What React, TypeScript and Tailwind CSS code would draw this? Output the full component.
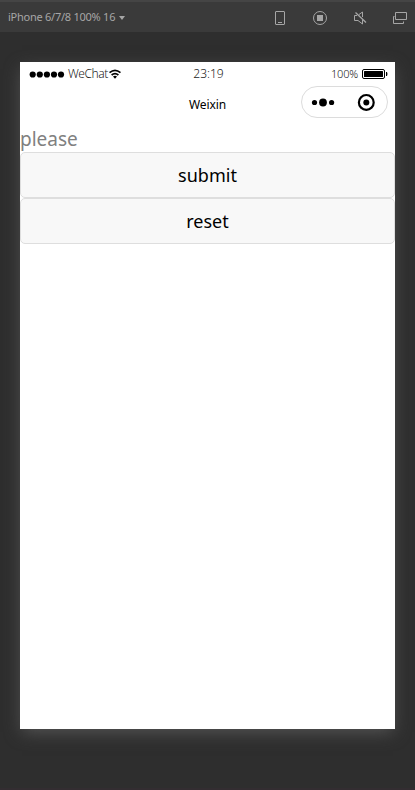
function Toolbar() {
  return (
    <header className="flex h-8 shrink-0 items-center justify-between border-t-2 border-[#454545] bg-[#3a3a3a] pt-0.5 pl-2 pr-[7px] text-[#a6a6a6]">
      <div className="mb-0.5 flex items-center gap-[3px]">
        <span className="w-[108px] whitespace-nowrap text-[11px] leading-4 tracking-[-0.25px]">iPhone 6/7/8 100% 16</span>
        <svg className="mt-0.5" width="6" height="4" viewBox="0 0 6 4" fill="currentColor"><path d="M0 0h6L3 4z" /></svg>
      </div>
      <div className="flex items-center gap-6">
        <svg width="16" height="16" viewBox="0 0 16 16" fill="none" stroke="currentColor">
          <rect x="3.500" y="1.500" width="9" height="13" rx=".5" /><path d="M6 12.500h4" />
        </svg>
        <svg width="16" height="16" viewBox="0 0 16 16" fill="none" stroke="currentColor">
          <circle cx="8" cy="8" r="6.500" /><rect x="5" y="5" width="6" height="6" fill="currentColor" stroke="none" />
        </svg>
        <svg width="16" height="16" viewBox="0 0 16 16" fill="none" stroke="currentColor">
          <path d="M5 5.500H2.500v5h3.500l4.500 3.500V9.500M7 4.500l3.500-2.500v5" /><path d="M3.500 2.500l10.500 10" strokeWidth="1.300" />
        </svg>
        <svg width="16" height="16" viewBox="0 0 16 16" fill="none" stroke="currentColor">
          <path d="M3.500 2.500h11v7h-11zM2.500 6.500h-1v7h10v-2" />
        </svg>
      </div>
    </header>
  );
}

function StatusBar() {
  return (
    <div className="grid h-[22px] grid-cols-3 items-center pl-[9px] pr-[7px] text-[12px] leading-[22px] text-[#222]">
      <div className="flex items-center">
        <svg width="36" height="8" viewBox="0 0 36 8">
          <circle cx="3.700" cy="4.500" r="3.100" /><circle cx="10.800" cy="4.500" r="3.100" /><circle cx="17.900" cy="4.500" r="3.100" /><circle cx="25" cy="4.500" r="3.100" /><circle cx="32" cy="4.500" r="3.100" />
        </svg>
        <span className="ml-[3px] w-[41px] whitespace-nowrap font-light tracking-[-0.4px]">WeChat</span>
        <svg width="12" height="10" viewBox="0 0 12 10" fill="none" stroke="#000" strokeWidth="1.700">
          <path d="M.5 3.700Q6-1 11.500 3.700M2.600 6Q6 3.200 9.400 6" /><path d="M4 7.500Q6 6 8 7.500L6 9.700z" fill="#000" stroke="none" />
        </svg>
      </div>
      <span className="text-center font-light">23:19</span>
      <div className="flex items-center justify-end gap-1">
        <span className="pt-px text-[11px] font-light tracking-[-0.2px]">100%</span>
        <svg className="mt-px" width="26" height="10" viewBox="0 0 26 10">
          <rect x=".5" y=".5" width="22" height="9" rx="1.500" fill="none" stroke="#000" />
          <rect x="2" y="2" width="19" height="6" rx=".5" /><path d="M24 3h1q1 2 0 4h-1z" />
        </svg>
      </div>
    </div>
  );
}

function NavigationBar() {
  return (
    <div className="grid h-[42px] grid-cols-[1fr_auto_1fr] items-center">
      <span className="col-start-2 text-[12px] leading-4 tracking-[-0.1px] text-black">Weixin</span>
      <div className="mt-0.5 mr-[7px] flex h-8 w-[87px] items-center justify-between self-start justify-self-end rounded-full border border-[#dcdcdc] pr-3 pl-[9px]">
        <svg width="24" height="10" viewBox="0 0 24 10">
          <circle cx="3.500" cy="5.500" r="2.600" /><circle cx="12" cy="5.500" r="3.900" /><circle cx="20.600" cy="5.500" r="2.600" />
        </svg>
        <svg width="18" height="18" viewBox="0 0 18 18">
          <circle cx="9.300" cy="9.400" r="7.400" fill="none" stroke="#000" strokeWidth="2.200" /><circle cx="9.300" cy="9.400" r="3" />
        </svg>
      </div>
    </div>
  );
}

const buttonClass =
  "block h-[46px] w-full rounded-[5px] border border-[#dedede] bg-[#f8f8f8] text-[18px] leading-[44px] text-black";

export default function App() {
  return (
    <div className="flex h-[790px] w-full flex-col overflow-hidden border-b-2 border-[#332d31] bg-[#2e2e2e] font-['Noto_Sans','Open_Sans',sans-serif]">
      <Toolbar />
      <main className="mx-5 mt-[30px] h-[667px] bg-white shadow-[0_5px_16px_-2px_#565656]">
        <StatusBar />
        <NavigationBar />
        <form onSubmit={(event) => event.preventDefault()}>
          <label className="block h-[26px] text-[19px] leading-[26px] text-[#808080]">please</label>
          <button type="submit" className={buttonClass}>submit</button>
          <button type="reset" className={buttonClass}>reset</button>
        </form>
      </main>
    </div>
  );
}
